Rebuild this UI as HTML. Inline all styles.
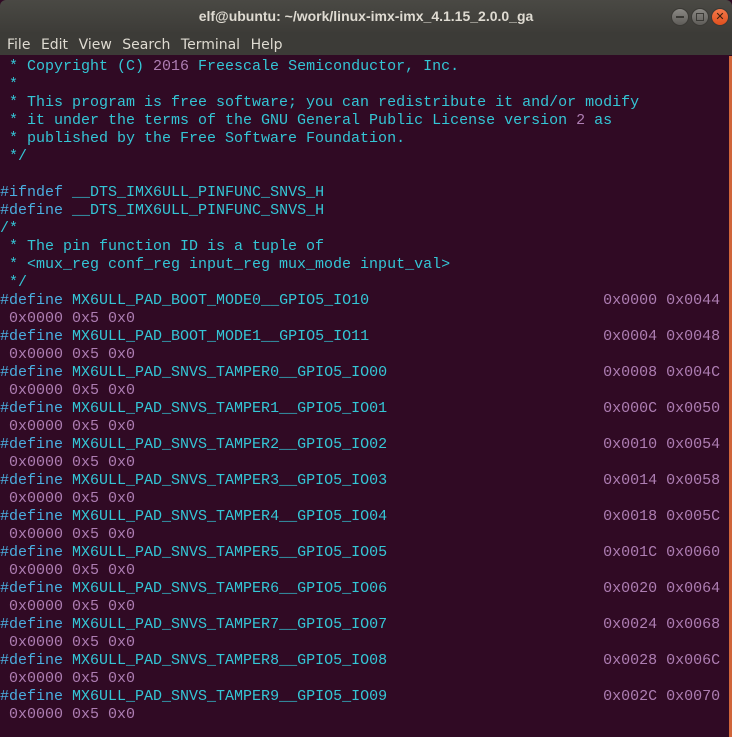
<!DOCTYPE html>
<html><head><style>
html,body{margin:0;padding:0;width:732px;height:737px;overflow:hidden;background:#300a24}
#title{position:absolute;left:0;top:0;width:732px;height:32px;background:linear-gradient(#4a4944,#3d3c38);border-radius:6px 6px 0 0;color:#dfdbd2;font:bold 14px "Liberation Sans",sans-serif;text-align:center;line-height:32px}
#menu{position:absolute;left:0;top:32px;width:732px;height:23px;overflow:hidden;background:#3c3b37;color:#dfdbd2;font:14px "DejaVu Sans","Liberation Sans",sans-serif;line-height:26px}
#menu span{margin-left:7px;margin-right:3.5px}
.btn{position:absolute;top:8px;width:16px;height:16px;border-radius:50%;background:linear-gradient(#8a8884,#5e5c58);border:1px solid #3a3935}
#term{position:absolute;left:0;top:58px;width:729px;height:679px;font:15px "Liberation Mono",monospace;line-height:18px;white-space:pre;color:#34c6d6}
#sb{position:absolute;left:729px;top:56px;width:3px;height:681px;background:#d0653a}
.c{color:#34c6d6}.d{color:#4aaee0}.n{color:#ad7db2}
</style></head><body>
<div id="title">elf@ubuntu: ~/work/linux-imx-imx_4.1.15_2.0.0_ga</div>
<div class="btn" style="left:671px"><div style="position:absolute;left:4px;top:7px;width:8px;height:2px;background:#3a3935"></div></div>
<div class="btn" style="left:691px"><div style="position:absolute;left:4px;top:4px;width:6px;height:6px;border:1px solid #3a3935"></div></div>
<div class="btn" style="left:711px;background:linear-gradient(#f4784a,#e0501e);color:#3a2010;font:bold 11px 'DejaVu Sans',sans-serif;text-align:center;line-height:16px">✕</div>
<div id="menu"><span>File</span><span>Edit</span><span>View</span><span>Search</span><span>Terminal</span><span>Help</span></div>
<div id="term"><span class="c"> * Copyright (C) <span class="n">2016</span> Freescale Semiconductor, Inc.
 *
 * This program is free software; you can redistribute it and/or modify
 * it under the terms of the GNU General Public License version <span class="n">2</span> as
 * published by the Free Software Foundation.
 */</span>

<span class="d">#ifndef</span> <span class="c">__DTS_IMX6ULL_PINFUNC_SNVS_H</span>
<span class="d">#define</span> <span class="c">__DTS_IMX6ULL_PINFUNC_SNVS_H</span>
<span class="c">/*
 * The pin function ID is a tuple of
 * &lt;mux_reg conf_reg input_reg mux_mode input_val&gt;
 */</span>
<span class="d">#define</span> <span class="c">MX6ULL_PAD_BOOT_MODE0__GPIO5_IO10</span>                          <span class="n">0x0000 0x0044</span>
<span class="n"> 0x0000 0x5 0x0</span>
<span class="d">#define</span> <span class="c">MX6ULL_PAD_BOOT_MODE1__GPIO5_IO11</span>                          <span class="n">0x0004 0x0048</span>
<span class="n"> 0x0000 0x5 0x0</span>
<span class="d">#define</span> <span class="c">MX6ULL_PAD_SNVS_TAMPER0__GPIO5_IO00</span>                        <span class="n">0x0008 0x004C</span>
<span class="n"> 0x0000 0x5 0x0</span>
<span class="d">#define</span> <span class="c">MX6ULL_PAD_SNVS_TAMPER1__GPIO5_IO01</span>                        <span class="n">0x000C 0x0050</span>
<span class="n"> 0x0000 0x5 0x0</span>
<span class="d">#define</span> <span class="c">MX6ULL_PAD_SNVS_TAMPER2__GPIO5_IO02</span>                        <span class="n">0x0010 0x0054</span>
<span class="n"> 0x0000 0x5 0x0</span>
<span class="d">#define</span> <span class="c">MX6ULL_PAD_SNVS_TAMPER3__GPIO5_IO03</span>                        <span class="n">0x0014 0x0058</span>
<span class="n"> 0x0000 0x5 0x0</span>
<span class="d">#define</span> <span class="c">MX6ULL_PAD_SNVS_TAMPER4__GPIO5_IO04</span>                        <span class="n">0x0018 0x005C</span>
<span class="n"> 0x0000 0x5 0x0</span>
<span class="d">#define</span> <span class="c">MX6ULL_PAD_SNVS_TAMPER5__GPIO5_IO05</span>                        <span class="n">0x001C 0x0060</span>
<span class="n"> 0x0000 0x5 0x0</span>
<span class="d">#define</span> <span class="c">MX6ULL_PAD_SNVS_TAMPER6__GPIO5_IO06</span>                        <span class="n">0x0020 0x0064</span>
<span class="n"> 0x0000 0x5 0x0</span>
<span class="d">#define</span> <span class="c">MX6ULL_PAD_SNVS_TAMPER7__GPIO5_IO07</span>                        <span class="n">0x0024 0x0068</span>
<span class="n"> 0x0000 0x5 0x0</span>
<span class="d">#define</span> <span class="c">MX6ULL_PAD_SNVS_TAMPER8__GPIO5_IO08</span>                        <span class="n">0x0028 0x006C</span>
<span class="n"> 0x0000 0x5 0x0</span>
<span class="d">#define</span> <span class="c">MX6ULL_PAD_SNVS_TAMPER9__GPIO5_IO09</span>                        <span class="n">0x002C 0x0070</span>
<span class="n"> 0x0000 0x5 0x0</span></div>
<div id="sb"></div>
</body></html>
